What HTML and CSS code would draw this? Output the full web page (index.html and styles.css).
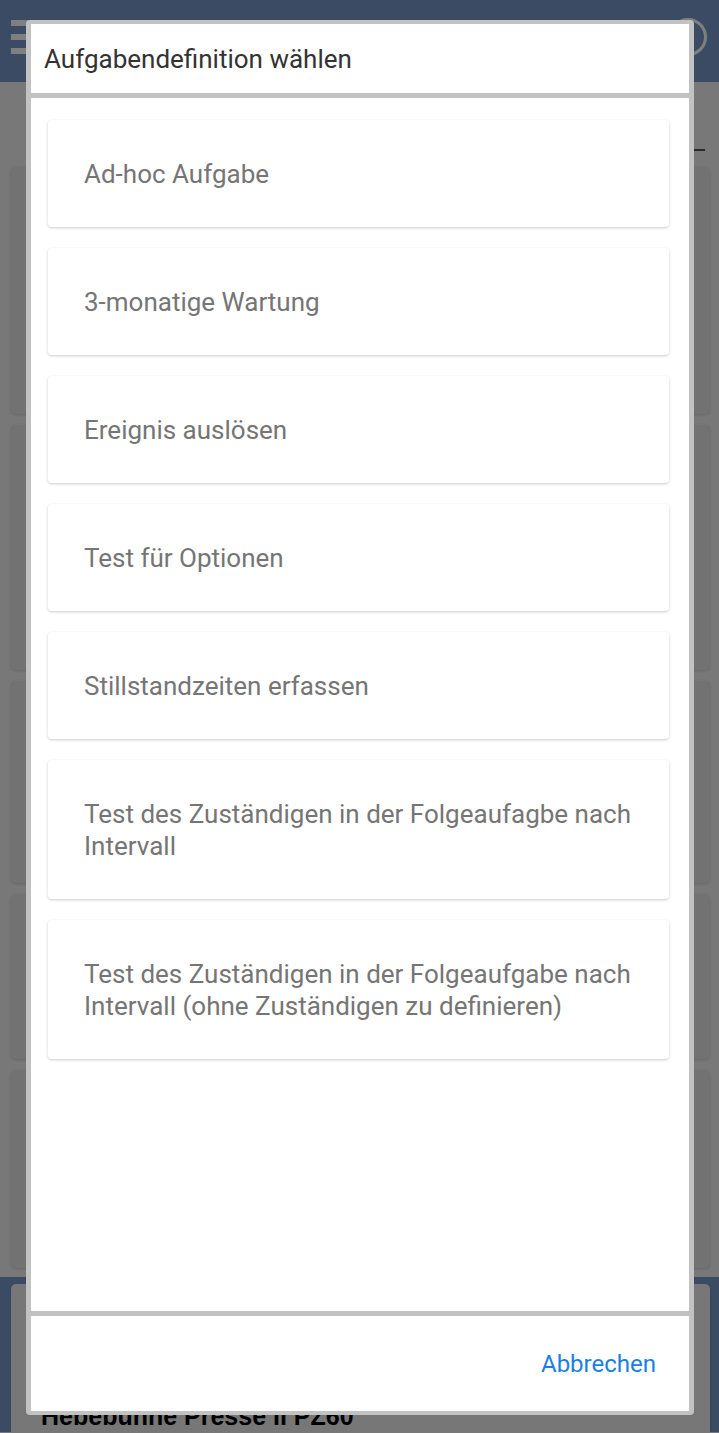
FILE: index.html
```html
<!DOCTYPE html>
<html lang="de">
<head>
    <meta charset="UTF-8">
    <meta name="viewport" content="width=device-width, initial-scale=1.0">
    <title>Aufgabendefinition wählen</title>
    <link rel="stylesheet" href="styles.css">
</head>
<body>
    <div class="app">
        <div class="topbar">
            <div class="burger"><span></span><span></span><span></span></div>
            <div class="avatar"></div>
        </div>
        <div class="tabline"></div>
        <div class="list">
            <div class="bg-card h1"></div>
            <div class="bg-card h2"></div>
            <div class="bg-card h3"></div>
            <div class="bg-card h4"></div>
            <div class="bg-card h5"></div>
        </div>
        <div class="bottom-band">
            <div class="bg-card machine">
                <span class="machine-name">Hebebühne Presse II PZ60</span>
            </div>
        </div>
    </div>

    <div class="backdrop"></div>

    <div class="dialog">
        <div class="dialog-head">Aufgabendefinition wählen</div>
        <div class="dialog-body">
            <div class="option">Ad-hoc Aufgabe</div>
            <div class="option">3-monatige Wartung</div>
            <div class="option">Ereignis auslösen</div>
            <div class="option">Test für Optionen</div>
            <div class="option">Stillstandzeiten erfassen</div>
            <div class="option">Test des Zuständigen in der Folgeaufagbe nach Intervall</div>
            <div class="option">Test des Zuständigen in der Folgeaufgabe nach Intervall (ohne Zuständigen zu definieren)</div>
        </div>
        <div class="dialog-foot">
            <a href="#" class="cancel">Abbrechen</a>
        </div>
    </div>
</body>
</html>
```

FILE: styles.css
```css
body {
    margin: 0;
    background: #f0f0f0;
    font-family: Roboto, "Noto Sans", sans-serif;
    overflow: hidden;
}
.app {
    height: 1433px;
    overflow: hidden;
}
.topbar {
    height: 82px;
    background: #7697c9;
    display: flex;
    justify-content: space-between;
    align-items: flex-start;
}
.burger {
    margin: 20px 0 0 11px;
    display: flex;
    flex-direction: column;
    gap: 8px;
}
.burger span {
    display: block;
    width: 24px;
    height: 6px;
    background: #fff;
}
.avatar {
    width: 32px;
    height: 32px;
    border: 3px solid #fff;
    border-radius: 50%;
    margin: 18px 12px 0 0;
}
.tabline {
    height: 2px;
    margin: 67px 14px 0 auto;
    width: 40px;
    background: #555;
}
.list {
    padding: 16px 9px 0 11px;
    display: flex;
    flex-direction: column;
    gap: 11px;
}
.bg-card {
    background: #e4e4e4;
    border-radius: 5px;
    box-shadow: 0 1px 3px rgba(0, 0, 0, 0.15);
}
.h1 { height: 247px; }
.h2 { height: 245px; }
.h3 { height: 202px; }
.h4 { height: 165px; }
.h5 { height: 198px; }
.bottom-band {
    margin-top: 9px;
    background: #7697c9;
    padding: 7px 9px 0 11px;
    height: 148px;
    overflow: hidden;
}
.machine {
    height: 200px;
    background: #eeeeee;
    padding: 118px 0 0 30px;
    box-sizing: border-box;
}
.machine-name {
    font-family: "Liberation Sans", Arial, sans-serif;
    font-weight: bold;
    font-size: 25px;
    color: #000;
}
.backdrop {
    position: fixed;
    inset: 0;
    background: rgba(0, 0, 0, 0.5);
}
.dialog {
    position: fixed;
    top: 20px;
    left: 26px;
    width: 658px;
    height: 1387px;
    background: #c2c2c2;
    border: solid #c2c2c2;
    border-width: 4px 5px;
    border-radius: 4px;
    display: flex;
    flex-direction: column;
    gap: 5px;
}
.dialog-head {
    background: #fff;
    height: 69px;
    display: flex;
    align-items: center;
    padding-left: 13px;
    font-size: 26px;
    color: #333;
}
.dialog-body {
    flex: 1;
    background: #fff;
    padding: 22px 20px 0 17px;
    display: flex;
    flex-direction: column;
    gap: 21px;
}
.option {
    background: #fff;
    border-radius: 4px;
    box-shadow: 0 1px 3px rgba(0, 0, 0, 0.2);
    padding: 38px 36px 37px;
    font-size: 26px;
    line-height: 32px;
    color: #757575;
}
.dialog-foot {
    background: #fff;
    height: 95px;
    display: flex;
    align-items: center;
    justify-content: flex-end;
    padding-right: 33px;
}
.cancel {
    text-decoration: none;
    color: #1a7fe4;
    font-size: 24px;
}
```
